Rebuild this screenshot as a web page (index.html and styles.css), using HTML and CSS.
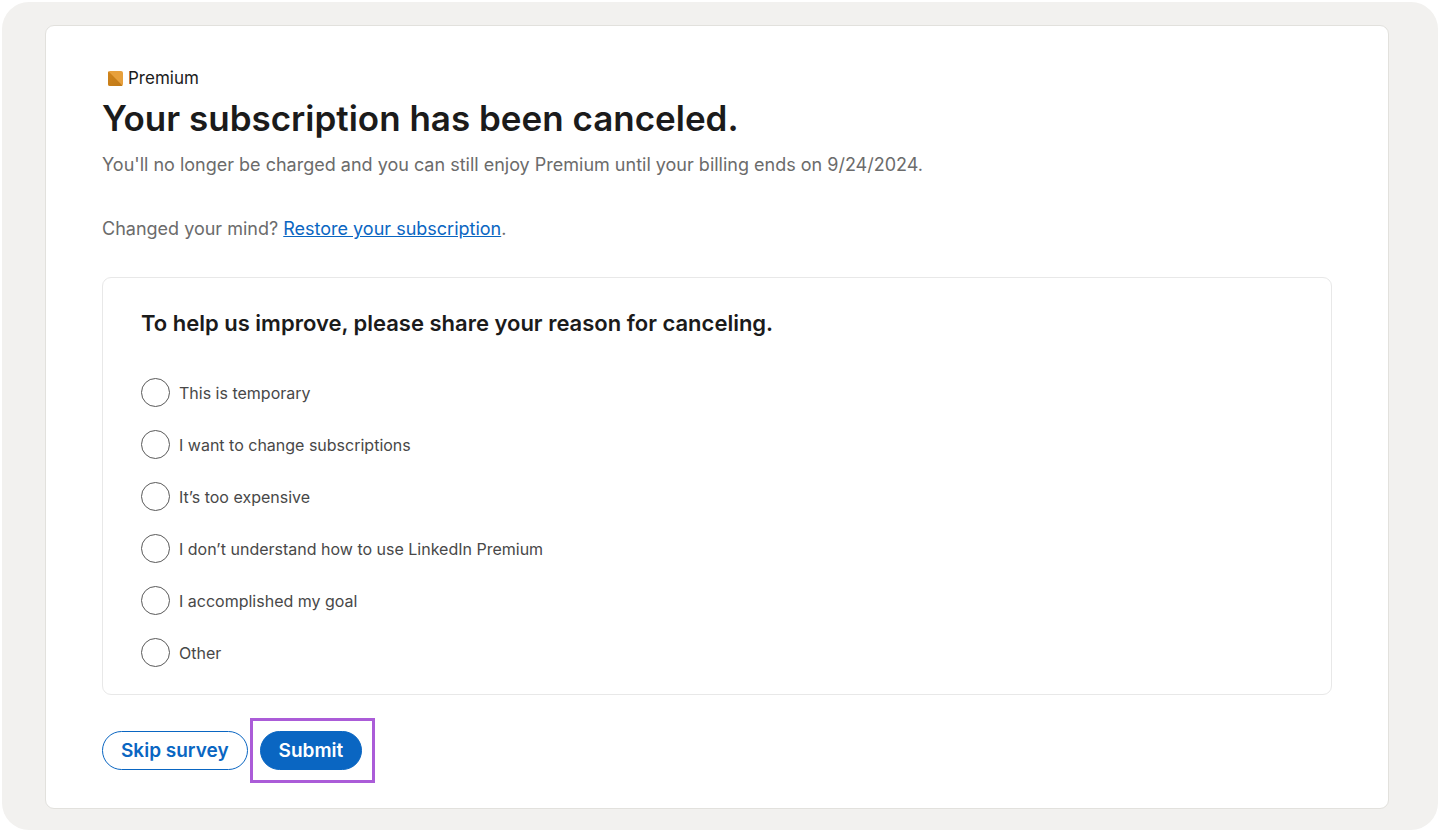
FILE: index.html
```html
<!DOCTYPE html>
<html lang="en">
<head>
  <meta charset="UTF-8" />
  <meta name="viewport" content="width=device-width, initial-scale=1.0"/>
  <title>Subscription canceled</title>
  <link rel="stylesheet" href="styles.css">
</head>
<body>
  <div class="page">
    <main class="card">
      <div class="brand">
        <svg class="brand-icon" viewBox="0 0 16 16" aria-hidden="true">
          <defs>
            <linearGradient id="gold" x1="0" y1="0" x2="1" y2="1">
              <stop offset="0" stop-color="#d0841c"/>
              <stop offset="1" stop-color="#c07a18"/>
            </linearGradient>
          </defs>
          <rect x="1" y="1" width="15" height="15" rx="2" fill="#e7a03c"/>
          <path d="M1 3v11a2 2 0 0 0 2 2h11a2 2 0 0 0 1.4-.6L1.6 1.6A2 2 0 0 0 1 3z" fill="url(#gold)"/>
        </svg>
        <span>Premium</span>
      </div>
      <h1>Your subscription has been canceled.</h1>
      <p class="info">You'll no longer be charged and you can still enjoy Premium until your billing ends on 9/24/2024.</p>
      <p class="info restore">Changed your mind? <a href="#">Restore your subscription</a>.</p>

      <form>
        <!-- Reasons -->
        <div class="survey" role="radiogroup" aria-labelledby="surveyTitle">
          <h2 id="surveyTitle">To help us improve, please share your reason for canceling.</h2>
          <div class="options">
            <label class="option"><input type="radio" name="reason" value="temporary" />This is temporary</label>
            <label class="option"><input type="radio" name="reason" value="change" />I want to change subscriptions</label>
            <label class="option"><input type="radio" name="reason" value="expensive" />It’s too expensive</label>
            <label class="option"><input type="radio" name="reason" value="understand" />I don’t understand how to use LinkedIn Premium</label>
            <label class="option"><input type="radio" name="reason" value="goal" />I accomplished my goal</label>
            <label class="option"><input type="radio" name="reason" value="other" />Other</label>
          </div>
        </div>

        <!-- Buttons -->
        <div class="actions">
          <button type="button" class="btn">Skip survey</button>
          <div class="highlight">
            <button type="submit" class="btn btn-primary">Submit</button>
          </div>
        </div>
      </form>
    </main>
  </div>
</body>
</html>
```

FILE: styles.css
```css
* {
  box-sizing: border-box;
}

body {
  margin: 0;
  padding: 2px;
  font-family: Inter, "Liberation Sans", sans-serif;
  background: #fff;
  color: #1b1b1b;
}

h1, h2, p {
  margin: 0;
}

.page {
  padding: 23px 49px 21px 43px;
  background: #f2f1ef;
  border-radius: 27px;
}

.card {
  padding: 42px 56px 25px;
  background: #fff;
  border: 1px solid #e2e1dd;
  border-radius: 9px;
}

.brand {
  display: flex;
  align-items: center;
  gap: 5px;
  padding-left: 5px;
  font-size: 17px;
  line-height: 20px;
}

.brand-icon {
  width: 16px;
  height: 16px;
}

h1 {
  margin-top: 6px;
  font-size: 35px;
  line-height: 48px;
  font-weight: 600;
}

.info {
  margin-top: 11px;
  font-size: 18px;
  line-height: 24px;
  color: #6b6b6b;
}

.restore {
  margin-top: 40px;
}

.info a {
  color: #0a66c2;
}

/* Survey */
.survey {
  margin-top: 36px;
  padding: 31px 38px 27px;
  border: 1px solid #e8e8e8;
  border-radius: 9px;
}

h2 {
  font-size: 22px;
  line-height: 28px;
  font-weight: 600;
}

.options {
  display: flex;
  flex-direction: column;
  align-items: flex-start;
  gap: 23px;
  margin-top: 41px;
}

.option {
  display: flex;
  align-items: center;
  gap: 9px;
  font-size: 16px;
  line-height: 24px;
  color: #484848;
  cursor: pointer;
}

.option input {
  appearance: none;
  width: 29px;
  height: 29px;
  margin: 0;
  border: 1px solid #5a5a5a;
  border-radius: 50%;
}

.option input:checked {
  border: 8px solid #0a66c2;
}

/* Buttons */
.actions {
  display: flex;
  align-items: center;
  gap: 2px;
  margin-top: 23px;
}

.btn {
  height: 39px;
  padding: 0 18px;
  border: 1px solid #0a66c2;
  border-radius: 20px;
  background: #fff;
  color: #0a66c2;
  font-family: inherit;
  font-size: 19px;
  font-weight: 600;
  cursor: pointer;
}

.btn-primary {
  background: #0a66c2;
  color: #fff;
}

.highlight {
  display: flex;
  padding: 10px 10px 10px 7px;
  border: 3px solid #ab5cd8;
}
```
